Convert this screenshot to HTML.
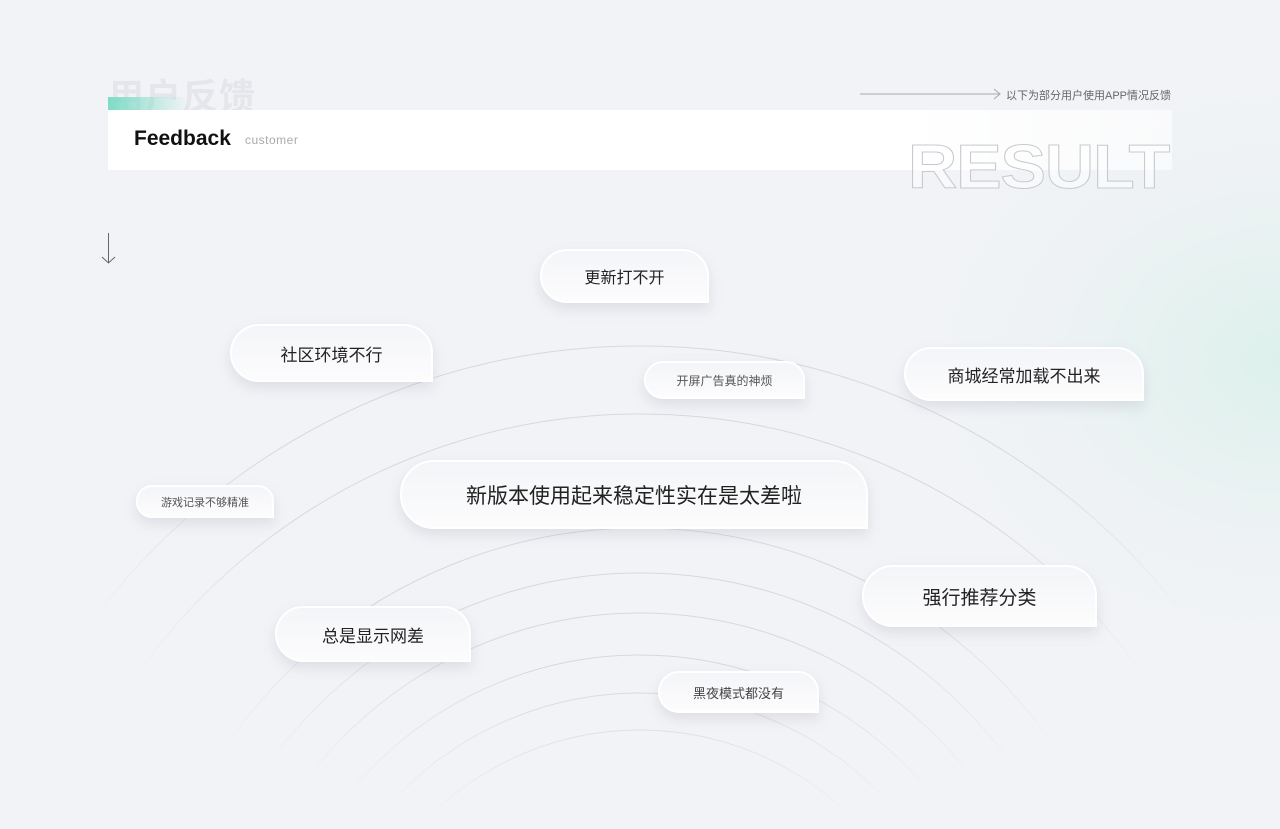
<!DOCTYPE html>
<html><head><meta charset="utf-8"><style>
*{margin:0;padding:0;box-sizing:border-box}
html,body{width:1280px;height:829px;overflow:hidden}
body{background:#f2f3f6;position:relative;font-family:"Liberation Sans","Noto Sans CJK SC",sans-serif}
.glow{position:absolute;left:900px;top:60px;width:380px;height:600px;background:radial-gradient(380px 300px at 380px 300px,rgba(200,238,226,.5),rgba(220,240,236,.2) 60%,rgba(242,243,246,0));}
.ghost{position:absolute;left:108px;top:68px;font-size:36px;font-weight:bold;color:#e4e6eb;letter-spacing:1px}
.teal{position:absolute;left:108px;top:97px;width:80px;height:13px;background:linear-gradient(90deg,#7fdcc6,rgba(127,220,198,0))}
.bar{position:absolute;left:108px;top:110px;width:1064px;height:60px;background:linear-gradient(90deg,#fff 75%,rgba(255,255,255,.6))}
.fb{position:absolute;left:134px;top:127px;font-size:21px;font-weight:bold;color:#111}
.cu{position:absolute;left:245px;top:133px;font-size:12px;color:#aaa;letter-spacing:.5px}
.rt{position:absolute;right:109px;top:87px;font-size:11px;color:#666}
.result{position:absolute;left:908px;top:137px;font-size:62px;font-weight:900;color:rgba(255,255,255,.5);-webkit-text-stroke:1px #c8cacf;letter-spacing:-1px;font-family:"Liberation Sans",sans-serif;line-height:1;transform:scaleX(1.1);transform-origin:0 0}
.arcs{position:absolute;left:0;top:0;-webkit-mask-image:radial-gradient(620px 420px at 640px 430px,#000 60%,transparent 100%);mask-image:radial-gradient(620px 420px at 640px 430px,#000 60%,transparent 100%)}
.b{position:absolute;display:flex;align-items:center;justify-content:center;color:#222;background:linear-gradient(180deg,#f4f5f8,#fcfcfd);border:2px solid #fff;box-shadow:0 6px 12px rgba(160,165,180,.25)}
</style></head><body>
<div class="glow"></div>
<svg class="arcs" width="1280" height="829">
<g fill="none" stroke="#d6d8de" stroke-width="1">
<circle cx="640" cy="1030" r="684"/>
<circle cx="640" cy="1030" r="616"/>
<circle cx="640" cy="1030" r="502"/>
<circle cx="640" cy="1030" r="457"/>
<circle cx="640" cy="1030" r="417"/>
<circle cx="640" cy="1030" r="375"/>
<circle cx="640" cy="1030" r="337"/>
<circle cx="640" cy="1030" r="300"/>
</g>
</svg>
<svg style="position:absolute;left:0;top:0" width="1280" height="300">
<line x1="860" y1="94" x2="1000" y2="94" stroke="#aaa" stroke-width="1"/>
<path d="M994 89 L1000 94 L994 99" fill="none" stroke="#aaa"/>
<line x1="108.5" y1="233" x2="108.5" y2="263" stroke="#666"/>
<path d="M102 257 L108.5 263 L115 257" fill="none" stroke="#666"/>
</svg>
<div class="ghost">用户反馈</div>
<div class="teal"></div>
<div class="bar"></div>
<div class="fb">Feedback</div>
<div class="cu">customer</div>
<div class="rt">以下为部分用户使用APP情况反馈</div>
<div class="result">RESULT</div>

<div class="b" style="left:540px;top:249px;width:169px;height:54px;border-radius:27px 27px 0 27px;font-size:16px">更新打不开</div>
<div class="b" style="left:230px;top:324px;width:203px;height:58px;border-radius:29px 29px 0 29px;font-size:17px">社区环境不行</div>
<div class="b" style="left:644px;top:361px;width:161px;height:38px;border-radius:19px 19px 0 19px;font-size:12px;color:#555">开屏广告真的神烦</div>
<div class="b" style="left:904px;top:347px;width:240px;height:54px;border-radius:27px 27px 0 27px;font-size:17px">商城经常加载不出来</div>
<div class="b" style="left:136px;top:485px;width:138px;height:33px;border-radius:16px 16px 0 16px;font-size:11px;color:#555">游戏记录不够精准</div>
<div class="b" style="left:400px;top:460px;width:468px;height:69px;border-radius:34px 34px 0 34px;font-size:21px">新版本使用起来稳定性实在是太差啦</div>
<div class="b" style="left:862px;top:565px;width:235px;height:62px;border-radius:31px 31px 0 31px;font-size:19px">强行推荐分类</div>
<div class="b" style="left:275px;top:606px;width:196px;height:56px;border-radius:28px 28px 0 28px;font-size:17px">总是显示网差</div>
<div class="b" style="left:658px;top:671px;width:161px;height:42px;border-radius:21px 21px 0 21px;font-size:13px;color:#444">黑夜模式都没有</div>
</body></html>
